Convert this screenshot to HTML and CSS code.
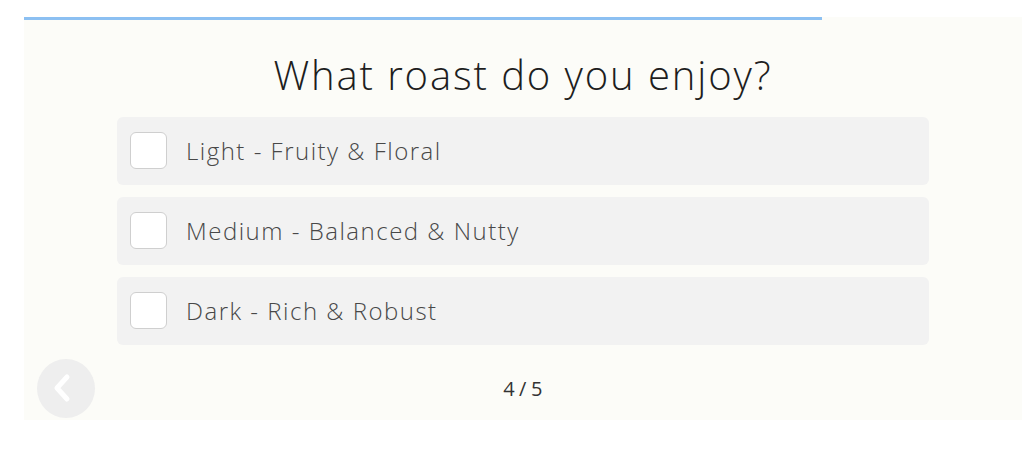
FILE: index.html
```html
<!DOCTYPE html>
<html>
<head>
<meta charset="utf-8">
<link rel="stylesheet" href="styles.css">
</head>
<body>
<div class="quiz">
  <div class="progress"><div class="progress-fill" style="width:80%"></div></div>
  <h1 class="title">What roast do you enjoy?</h1>
  <div class="options">
    <label class="option"><span class="box"></span><span class="label">Light - Fruity &amp; Floral</span></label>
    <label class="option"><span class="box"></span><span class="label">Medium - Balanced &amp; Nutty</span></label>
    <label class="option"><span class="box"></span><span class="label">Dark - Rich &amp; Robust</span></label>
  </div>
  <div class="footer">
    <button class="back" aria-label="Back">
      <svg width="24" height="34" viewBox="0 0 24 34"><path d="M16 6 L6 17 L16 28" fill="none" stroke="#fff" stroke-width="5" stroke-linecap="round" stroke-linejoin="round"/></svg>
    </button>
    <div class="count">4/5</div>
  </div>
</div>
</body>
</html>
```
FILE: styles.css
```css
html, body { margin: 0; padding: 0; background: #fff; }
body { font-family: "Open Sans", "DejaVu Sans", sans-serif; }
.quiz {
  margin: 17px 2px 0 24px;
  height: 403px;
  background: #fcfcf8;
  display: flex;
  flex-direction: column;
  align-items: center;
}
.progress { align-self: stretch; height: 3px; }
.progress-fill { height: 3px; background: #8cc0f2; }
.title {
  margin: 31px 0 0;
  font-size: 40px;
  font-weight: 300;
  letter-spacing: 1.9px;
  color: #1e1e1e;
  line-height: 48px;
}
.options {
  margin-top: 18px;
  width: 812px;
  display: flex;
  flex-direction: column;
  gap: 12.5px;
}
.option {
  height: 67.5px;
  background: #f2f2f2;
  border-radius: 6px;
  display: flex;
  align-items: center;
  padding-left: 13px;
  box-sizing: border-box;
}
.box {
  width: 37px; height: 37px;
  box-sizing: border-box;
  background: #fff;
  border: 1px solid #cfcfcf;
  border-radius: 6px;
}
.label {
  margin-left: 19px;
  font-size: 24px;
  font-weight: 350;
  letter-spacing: 1.5px;
  color: #484848;
}
.footer {
  align-self: stretch;
  position: relative;
  display: flex;
  justify-content: center;
  align-items: center;
  margin-top: 14px;
  height: 59px;
}
.back {
  position: absolute;
  left: 13px; top: 0;
  width: 58px; height: 59px;
  border-radius: 50%;
  border: none;
  background: #eeeeee;
  padding: 0;
  display: flex; align-items: center; justify-content: center;
}
.back svg { margin-left: -6px; }
.count { font-size: 20px; color: #333; letter-spacing: 4.5px; margin-left: 4px; }
```
